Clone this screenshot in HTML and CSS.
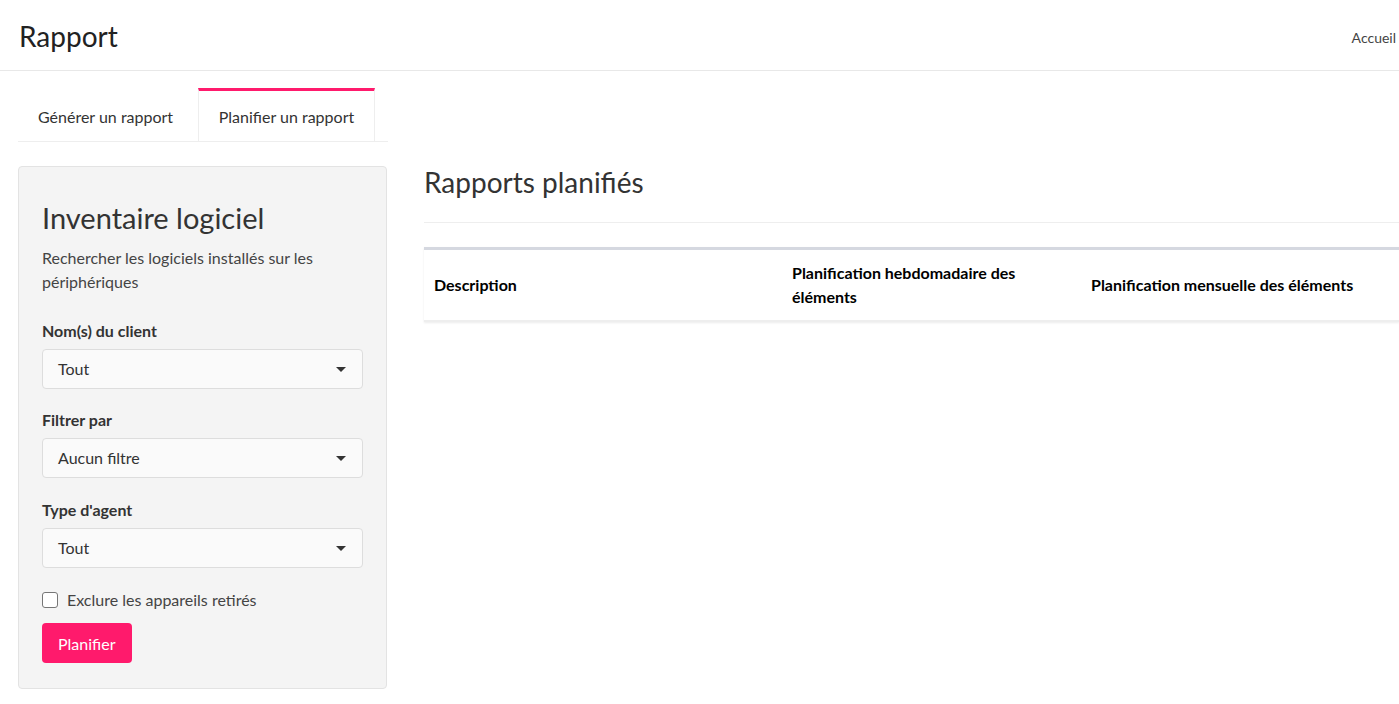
FILE: index.html
```html
<!DOCTYPE html>
<html lang="fr">
<head>
<meta charset="utf-8">
<title>Rapport</title>
<link rel="stylesheet" href="styles.css">
</head>
<body>
<header class="topbar">
  <h1 class="page-title">Rapport</h1>
  <a class="crumb" href="#">Accueil</a>
</header>
<div class="layout">
  <div class="left-col">
    <nav class="tabs">
      <div class="tab">Générer un rapport</div>
      <div class="tab active">Planifier un rapport</div>
    </nav>
    <section class="panel">
      <h2 class="panel-title">Inventaire logiciel</h2>
      <p class="panel-desc">Rechercher les logiciels installés sur les périphériques</p>
      <div class="field field-first">
        <label class="field-label">Nom(s) du client</label>
        <div class="select"><span>Tout</span><span class="caret"></span></div>
      </div>
      <div class="field">
        <label class="field-label">Filtrer par</label>
        <div class="select"><span>Aucun filtre</span><span class="caret"></span></div>
      </div>
      <div class="field">
        <label class="field-label">Type d'agent</label>
        <div class="select"><span>Tout</span><span class="caret"></span></div>
      </div>
      <label class="check-row"><span class="checkbox"></span><span>Exclure les appareils retirés</span></label>
      <button class="btn">Planifier</button>
    </section>
  </div>
  <div class="right-col">
    <h2 class="section-title">Rapports planifiés</h2>
    <hr class="divider">
    <table class="report-table">
      <colgroup>
        <col class="c1"><col class="c2"><col class="c3">
      </colgroup>
      <thead>
        <tr>
          <th>Description</th>
          <th>Planification hebdomadaire des éléments</th>
          <th>Planification mensuelle des éléments</th>
        </tr>
      </thead>
    </table>
  </div>
</div>
</body>
</html>
```

FILE: styles.css
```css
html, body {
  margin: 0;
  padding: 0;
  background: #fff;
  overflow: hidden;
}
body {
  font-family: "Lato", "Open Sans", sans-serif;
  color: #333;
  font-size: 16px;
  line-height: 24px;
}
.topbar {
  height: 70px;
  border-bottom: 1px solid #e8e8e8;
  display: flex;
  align-items: center;
  justify-content: space-between;
  padding: 0 3px 0 19px;
}
.page-title {
  margin: 0;
  font-size: 28px;
  font-weight: 400;
  color: #222;
  line-height: 36px;
  padding-top: 2px;
}
.crumb {
  font-size: 14px;
  color: #444;
  text-decoration: none;
  padding-top: 6px;
}
.layout {
  display: flex;
  gap: 36px;
  padding-left: 18px;
  padding-top: 17px;
}
.left-col {
  width: 370px;
  flex: none;
}
.tabs {
  display: flex;
  border-bottom: 1px solid #eee;
  height: 53px;
}
.tab {
  padding: 1px 20px 0 20px;
  display: flex;
  align-items: center;
  color: #333;
  border-top: 3px solid transparent;
}
.tab.active {
  border-top-color: #ff1a6c;
  border-left: 1px solid #eee;
  border-right: 1px solid #eee;
  padding: 1px 19px 0 19px;
  width: 177px;
  box-sizing: border-box;
  justify-content: center;
}
.tab:first-child {
  width: 180px;
  box-sizing: border-box;
}
.panel {
  margin-top: 24px;
  width: 369px;
  box-sizing: border-box;
  background: #f4f4f4;
  border: 1px solid #e3e3e3;
  border-radius: 4px;
  padding: 33px 23px 25px 23px;
}
.panel-title {
  margin: 0;
  font-size: 29px;
  font-weight: 400;
  line-height: 36px;
  color: #333;
}
.panel-desc {
  margin: 10px 0 25px 0;
  color: #444;
}
.field {
  margin-bottom: 20px;
}
.field.field-first {
  margin-bottom: 19px;
}
.field-label {
  display: block;
  font-weight: 700;
  margin-bottom: 6px;
  color: #333;
}
.select {
  height: 40px;
  box-sizing: border-box;
  border: 1px solid #ddd;
  border-radius: 4px;
  background: #fafafa;
  display: flex;
  align-items: center;
  justify-content: space-between;
  padding: 0 16px 0 15px;
  color: #333;
}
.caret {
  width: 0;
  height: 0;
  border-left: 5px solid transparent;
  border-right: 5px solid transparent;
  border-top: 5px solid #333;
}
.check-row {
  display: flex;
  align-items: center;
  gap: 9px;
  color: #444;
}
.checkbox {
  width: 16px;
  height: 16px;
  box-sizing: border-box;
  border: 1px solid #767676;
  border-radius: 3px;
  background: #fff;
}
.btn {
  margin-top: 11px;
  height: 40px;
  padding: 0 16px;
  border: none;
  border-radius: 4px;
  background: #ff1a6c;
  color: #fff;
  font-family: inherit;
  font-size: 16px;
  display: block;
}
.right-col {
  flex: 1;
  min-width: 0;
}
.section-title {
  margin: 0;
  font-size: 28px;
  font-weight: 400;
  line-height: 36px;
  color: #333;
  padding-top: 76px;
}
.divider {
  border: none;
  border-top: 1px solid #eee;
  margin: 22px 0 24px 0;
}
.report-table {
  width: 100%;
  border-collapse: collapse;
  table-layout: fixed;
  border-top: 3px solid #d5d8e0;
  box-shadow: 0 1px 2px rgba(0,0,0,0.08);
}
.c1 { width: 358px; }
.c2 { width: 299px; }
.report-table th {
  text-align: left;
  font-weight: 700;
  color: #000;
  padding: 11px 10px;
  height: 70px;
  box-sizing: border-box;
  border-bottom: 2px solid #eee;
  vertical-align: middle;
}
```
